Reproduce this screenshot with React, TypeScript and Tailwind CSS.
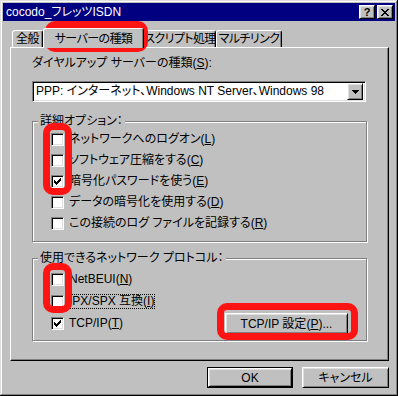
import React from "react";

const raised =
  "border border-t-white border-l-white border-r-black border-b-black shadow-[inset_1px_1px_0_#dfdfdf,inset_-1px_-1px_0_#808080]";
const sunken =
  "border border-t-[#808080] border-l-[#808080] border-r-white border-b-white shadow-[inset_1px_1px_0_#000,inset_-1px_-1px_0_#dfdfdf]";
const etched = "border border-[#808080] shadow-[inset_1px_1px_0_#fff,1px_1px_0_#fff]";

function Key({ k }: { k: string }) {
  return (
    <>
      (<span className="underline underline-offset-1">{k}</span>)
    </>
  );
}

function CheckBox({ checked }: { checked?: boolean }) {
  return (
    <span className={`w-[13px] h-[13px] shrink-0 bg-white flex items-center justify-center ${sunken}`}>
      {checked && (
        <svg width="7" height="7" viewBox="0 0 7 7" shapeRendering="crispEdges">
          <polygon points="0,2 2,4 7,-1 7,2 2,7 0,5" fill="#000" />
        </svg>
      )}
    </span>
  );
}

function Row({ checked, children, focus }: { checked?: boolean; children: React.ReactNode; focus?: boolean }) {
  return (
    <div className="flex items-center gap-[5px] h-[13px]">
      <CheckBox checked={checked} />
      <span className={`leading-[13px] ${focus ? "outline-1 outline-dotted outline-black" : ""}`}>{children}</span>
    </div>
  );
}

function Group({ title, className, children }: { title: string; className: string; children: React.ReactNode }) {
  return (
    <div className={`relative w-[335px] ${etched} ${className}`}>
      <span className="absolute -top-[7px] left-[5px] px-[2px] bg-[#c0c0c0] leading-[13px]">{title}</span>
      {children}
    </div>
  );
}

function Tab({ label, w, selected }: { label: string; w: string; selected?: boolean }) {
  return (
    <div
      className={`flex items-center justify-center shrink-0 border-l border-t border-r border-l-white border-t-white border-r-black rounded-t-[3px] shadow-[inset_-1px_0_0_#808080] bg-[#c0c0c0] tracking-[-0.6px] ${w} ${
        selected ? "h-[20px] -mb-[1px] relative z-10" : "h-[17px]"
      }`}
    >
      {label}
    </div>
  );
}

function Highlight({ className }: { className: string }) {
  return <div className={`absolute border-[7px] border-[#ff1414] rounded-[10px] blur-[0.5px] ${className}`} />;
}

export default function App() {
  return (
    <div className="relative w-[398px] h-[396px] bg-[#c0c0c0] p-[3px] text-[12px] text-black whitespace-nowrap font-['Liberation_Sans','Noto_Sans_CJK_JP',sans-serif] [font-feature-settings:'palt'] shadow-[inset_-1px_-1px_0_#000,inset_1px_1px_0_#dfdfdf,inset_-2px_-2px_0_#808080,inset_2px_2px_0_#fff] overflow-hidden">
      {/* title bar */}
      <div className="h-[18px] bg-[#000080] flex items-center justify-between pl-[3px] pr-[2px]">
        <span className="text-white leading-[14px]">cocodo_フレッツISDN</span>
        <div className="flex gap-[2px]">
          <div className={`w-[16px] h-[14px] bg-[#c0c0c0] flex items-center justify-center font-bold text-[11px] leading-[11px] ${raised}`}>
            ?
          </div>
          <div className={`w-[16px] h-[14px] bg-[#c0c0c0] flex items-center justify-center ${raised}`}>
            <svg width="8" height="7" viewBox="0 0 8 7" shapeRendering="crispEdges">
              <path d="M0 0h2l2 2.5L6 0h2L5 3.5 8 7H6L4 4.5 2 7H0l3-3.5z" fill="#000" />
            </svg>
          </div>
        </div>
      </div>

      {/* tabs */}
      <div className="mt-[7px] ml-[9px] flex items-end h-[19px]">
        <Tab label="全般" w="w-[31px]" />
        <Tab label="サーバーの種類" w="w-[101px]" selected />
        <Tab label="スクリプト処理" w="w-[72px]" />
        <Tab label="マルチリンク" w="w-[66px]" />
      </div>

      {/* panel */}
      <div className="ml-[7px] w-[379px] h-[314px] border border-t-white border-l-white border-r-black border-b-black shadow-[inset_-1px_-1px_0_#808080] pl-[21px] pt-[9px]">
        <div className="leading-[12px] h-[12px]">
          ダイヤルアップ サーバーの種類<Key k="S" />:
        </div>

        <div className={`mt-[12px] w-[334px] h-[21px] bg-white flex items-center justify-between pl-[3px] pr-[2px] ${sunken}`}>
          <span className="leading-[13px]">PPP: インターネット、Windows NT Server、Windows 98</span>
          <div className={`w-[16px] h-[17px] bg-[#c0c0c0] flex items-center justify-center ${raised}`}>
            <svg width="7" height="4" viewBox="0 0 7 4" shapeRendering="crispEdges">
              <polygon points="0,0 7,0 3.5,4" fill="#000" />
            </svg>
          </div>
        </div>

        <Group title="詳細オプション：" className="mt-[19px] h-[121px]">
          <div className="pl-[18px] pt-[11px] flex flex-col gap-[8px]">
            <Row>
              ネットワークへのログオン<Key k="L" />
            </Row>
            <Row>
              ソフトウェア圧縮をする<Key k="C" />
            </Row>
            <Row checked>
              暗号化パスワードを使う<Key k="E" />
            </Row>
            <Row>
              データの暗号化を使用する<Key k="D" />
            </Row>
            <Row>
              この接続のログ ファイルを記録する<Key k="R" />
            </Row>
          </div>
        </Group>

        <Group title="使用できるネットワーク プロトコル：" className="mt-[16px] h-[83px]">
          <div className="pl-[18px] pt-[14px] flex flex-col gap-[9px]">
            <Row>
              NetBEUI<Key k="N" />
            </Row>
            <Row focus>
              IPX/SPX 互換<Key k="I" />
            </Row>
            <div className="flex items-center justify-between h-[13px] pr-[18px]">
              <Row checked>
                TCP/IP<Key k="T" />
              </Row>
              <div className={`w-[123px] h-[21px] flex items-center justify-center shrink-0 ${raised}`}>
                TCP/IP 設定<Key k="P" />...
              </div>
            </div>
          </div>
        </Group>
      </div>

      {/* bottom buttons */}
      <div className="mt-[6px] flex justify-end gap-[9px] pr-[6px]">
        <div className="w-[86px] h-[21px] border border-black">
          <div className={`h-full flex items-center justify-center ${raised}`}>OK</div>
        </div>
        <div className={`w-[87px] h-[21px] flex items-center justify-center ${raised}`}>キャンセル</div>
      </div>

      <Highlight className="left-[45px] top-[21px] w-[103px] h-[31px]" />
      <Highlight className="left-[43px] top-[123px] w-[29px] h-[72px]" />
      <Highlight className="left-[43px] top-[263px] w-[29px] h-[50px]" />
      <Highlight className="left-[217px] top-[303px] w-[141px] h-[37px]" />
    </div>
  );
}
